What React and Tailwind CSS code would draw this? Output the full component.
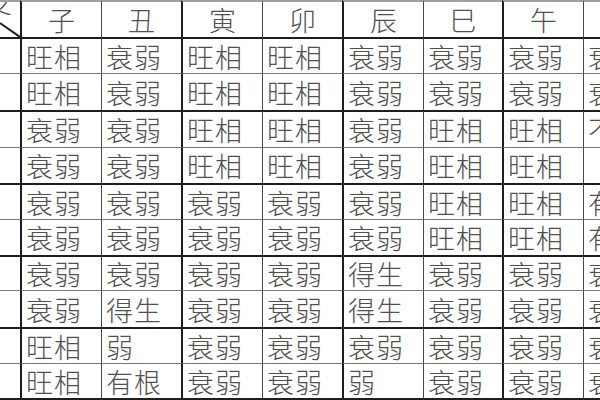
const header = ["子", "丑", "寅", "卯", "辰", "巳", "午", ""];

const rows = [
  ["旺相", "衰弱", "旺相", "旺相", "衰弱", "衰弱", "衰弱", "衰弱"],
  ["旺相", "衰弱", "旺相", "旺相", "衰弱", "衰弱", "衰弱", "衰弱"],
  ["衰弱", "衰弱", "旺相", "旺相", "衰弱", "旺相", "旺相", "不"],
  ["衰弱", "衰弱", "旺相", "旺相", "衰弱", "旺相", "旺相", ""],
  ["衰弱", "衰弱", "衰弱", "衰弱", "衰弱", "旺相", "旺相", "有"],
  ["衰弱", "衰弱", "衰弱", "衰弱", "衰弱", "旺相", "旺相", "有"],
  ["衰弱", "衰弱", "衰弱", "衰弱", "得生", "衰弱", "衰弱", "衰弱"],
  ["衰弱", "得生", "衰弱", "衰弱", "得生", "衰弱", "衰弱", "衰弱"],
  ["旺相", "弱", "衰弱", "衰弱", "衰弱", "衰弱", "衰弱", "衰弱"],
  ["旺相", "有根", "衰弱", "衰弱", "弱", "衰弱", "衰弱", "衰弱"],
];

// odd column index = thick line on its left
function colBorder(c) {
  if (c === 0) return "";
  return c % 2 === 1 ? "border-l-2 border-l-[#1e1e1e]" : "border-l border-l-[#4a4a4a]";
}

function rowBorder(r, last) {
  const top = r % 2 === 1 ? "border-t-2 border-t-[#1e1e1e]" : "border-t border-t-[#7a7a7a]";
  return last ? top + " border-b-2 border-b-[#1e1e1e]" : top;
}

export default function App() {
  return (
    <div
      className="w-[600px] h-[400px] overflow-hidden bg-white text-[#505050]"
      style={{ fontFamily: '"Noto Sans CJK SC", "Noto Sans", sans-serif' }}
    >
      <div className="grid grid-cols-[20px_81px_80px_81px_80px_81px_79px_81px_80px] grid-rows-[37px_36px_37px_37px_36px_36px_36px_35px_37px_36px_37px] w-[663px]">
        {/* corner cell with diagonal split */}
        <div className="relative overflow-hidden border-t-2 border-t-[#a0a0a0]">
          <span className="absolute left-[-15px] top-[-14px] text-[27px] font-light leading-none">支</span>
          <svg className="absolute inset-0" width="20" height="35" viewBox="0 0 20 35">
            <line x1="0" y1="21" x2="20" y2="35" stroke="#1e1e1e" strokeWidth="2" />
          </svg>
        </div>
        {header.map((h, i) => (
          <div
            key={"h" + i}
            className={"flex items-center justify-center border-t-2 border-t-[#a0a0a0] text-[27px] font-light leading-none " + colBorder(i + 1)}
          >
            {h}
          </div>
        ))}

        {rows.map((row, r) => (
          <>
            <div key={"f" + r} className={rowBorder(r + 1, r === rows.length - 1)} />
            {row.map((cell, c) => (
              <div
                key={r + "-" + c}
                className={
                  "flex items-center whitespace-nowrap pl-[4px] text-[27px] font-light leading-none tracking-[1px] " +
                  rowBorder(r + 1, r === rows.length - 1) +
                  " " +
                  colBorder(c + 1)
                }
              >
                {cell}
              </div>
            ))}
          </>
        ))}
      </div>
    </div>
  );
}
